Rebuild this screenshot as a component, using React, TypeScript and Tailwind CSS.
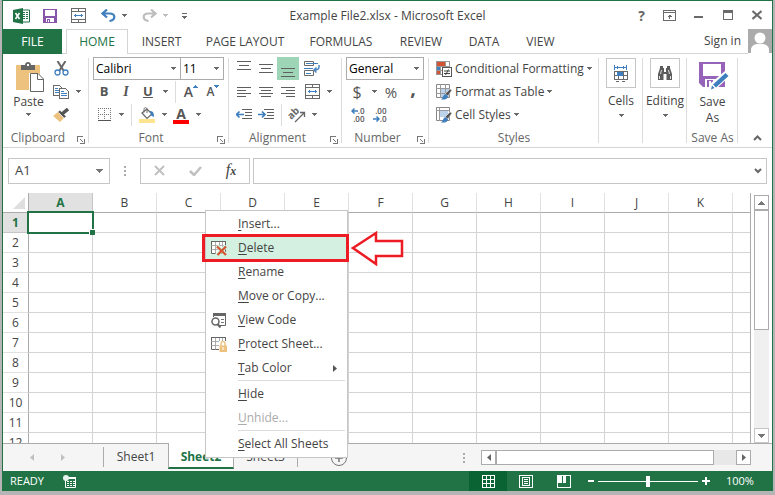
import React from "react";

const stroke = "#6a6a6a";
const blue = "#3f7fbf";

type SvgProps = { w: number; h: number; children: React.ReactNode; crisp?: boolean };

function Svg({ w, h, children, crisp = true }: SvgProps) {
  return (
    <svg
      width={w}
      height={h}
      viewBox={`0 0 ${w} ${h}`}
      fill="none"
      shapeRendering={crisp ? "crispEdges" : "auto"}
      className="shrink-0"
      aria-hidden="true"
    >
      {children}
    </svg>
  );
}

function Caret({ color = "#6a6a6a" }: { color?: string }) {
  return (
    <Svg w={5} h={3}>
      <path d="M0 0h5v1H0zM1 1h3v1H1zM2 2h1v1H2z" fill={color} />
    </Svg>
  );
}

function CaretButton({ label, color }: { label: string; color?: string }) {
  return (
    <button aria-label={label} className="flex h-[22px] w-3 shrink-0 items-center justify-center">
      <Caret color={color} />
    </button>
  );
}

function Tool({ label, children, active }: { label: string; children: React.ReactNode; active?: boolean }) {
  return (
    <button
      aria-label={label}
      className={`flex h-[23px] w-[22px] shrink-0 items-center justify-center ${active ? "bg-[#9fd5b7]" : ""}`}
    >
      {children}
    </button>
  );
}

function Divider() {
  return <span className="mx-1 h-[22px] w-px shrink-0 bg-[#dcdcdc]" />;
}

function Combo({ label, value, className }: { label: string; value: string; className: string }) {
  return (
    <div className={`relative h-[23px] border border-[#ababab] ${className}`}>
      <select aria-label={label} className="h-full w-full appearance-none bg-white pl-0.5 text-black outline-none">
        <option>{value}</option>
      </select>
      <span className="pointer-events-none absolute right-1 top-[9px]">
        <Caret />
      </span>
    </div>
  );
}

function Launcher({ label }: { label: string }) {
  return (
    <button aria-label={label} className="absolute right-1 top-[7px]">
      <Svg w={8} h={8}>
        <path d="M0.5 6V.5H6M3 3l3 3M7.5 3v4.5H3" stroke="#777" />
      </Svg>
    </button>
  );
}

function Group({
  name,
  width,
  launcher,
  children,
}: {
  name?: string;
  width: string;
  launcher?: boolean;
  children: React.ReactNode;
}) {
  return (
    <section className={`relative flex shrink-0 flex-col pt-[3px] ${width}`}>
      <div className="h-[73px] px-1">{children}</div>
      {name && (
        <footer className="relative h-[18px] text-center leading-[18px] text-[#666]">
          <span className={launcher ? "pr-4" : ""}>{name}</span>
          {launcher && <Launcher label={`${name} settings`} />}
        </footer>
      )}
      <span className="absolute bottom-1 right-0 top-1 w-px bg-[#dcdcdc]" />
    </section>
  );
}

/* ---------- icons ---------- */

const ExcelLogo = () => (
  <Svg w={17} h={16} crisp={false}>
    <path d="M9 2h7.500v12H9z" fill="#fff" stroke="#217346" />
    <path d="M10 4.500h2M13 4.500h2M10 6.500h2M13 6.500h2M10 8.500h2M13 8.500h2M10 10.500h2M13 10.500h2" stroke="#217346" />
    <path d="M0 2l10-2v16L0 14z" fill="#217346" />
    <path d="M2.500 5l4 6M6.500 5l-4 6" stroke="#fff" strokeWidth="1.600" />
  </Svg>
);

const SaveIcon = () => (
  <Svg w={14} h={14}>
    <path d="M0 0h14v14H0z" fill="#8855ab" />
    <path d="M2 1h10v6H2zM3 9h8v4H3z" fill="#fff" />
    <path d="M4 10h3v3H4z" fill="#8855ab" />
    <path d="M5 11h1v2H5z" fill="#fff" />
  </Svg>
);

const MergeIcon = () => (
  <Svg w={15} h={15}>
    <path d="M.5.500h14v14H.500zM0 3.500h15M0 11.500h15M7.500 0v4M7.500 11v4" stroke={stroke} />
    <path d="M3 7.500h9M4.500 6v3M10.500 6v3" stroke={blue} />
  </Svg>
);

const UndoIcon = ({ color, flip }: { color: string; flip?: boolean }) => (
  <Svg w={15} h={13} crisp={false}>
    <g transform={flip ? "translate(15 0) scale(-1 1)" : undefined} stroke={color} strokeWidth="2.200">
      <path d="M6 0.500L1.500 4.500 6 8.500M2 4.500h6.500c3 0 4.800 1.500 4.800 3.500s-1.500 3.500-4.800 4" />
    </g>
  </Svg>
);

const PasteIcon = () => (
  <Svg w={29} h={31} crisp={false}>
    <path d="M0 3h24v25H0z" fill="#ecc27e" />
    <path d="M5 3h4c0-4 6-4 6 0h4v5H5z" fill="#666" />
    <path d="M11 2h2v2h-2z" fill="#fff" />
    <path d="M13 11h9l6.500 6.500V31H13z" fill="#fff" />
    <path d="M14.500 11.500h7.500l5.500 5.500v12.500h-13zM21.500 11.500v6h6" stroke="#666" />
  </Svg>
);

const CutIcon = () => (
  <Svg w={15} h={15} crisp={false}>
    <path d="M3.500 0l6 9.500M11.500 0l-6 9.500" stroke="#666" strokeWidth="2" />
    <circle cx="3.500" cy="11.500" r="2.500" stroke={blue} strokeWidth="1.300" />
    <circle cx="11.500" cy="11.500" r="2.500" stroke={blue} strokeWidth="1.300" />
  </Svg>
);

const CopyIcon = () => (
  <Svg w={16} h={14}>
    <path d="M.500.500h6l2 2v8h-8z" fill="#fff" stroke={stroke} />
    <path d="M2 3.500h3M2 5.500h4M2 7.500h4" stroke={blue} />
    <path d="M6.500 3.500h6l3 3v7h-9z" fill="#fff" stroke={stroke} />
    <path d="M8 6.500h3M8 8.500h6M8 10.500h6" stroke={blue} />
  </Svg>
);

const BrushIcon = () => (
  <Svg w={16} h={14} crisp={false}>
    <path d="M0 8l5-4 6 6-4 4z" fill="#ecc27e" />
    <path d="M5 4l2-1.500 6 6L11 10z" fill="#555" />
    <path d="M9 6l6-5" stroke="#555" strokeWidth="3.500" />
    <path d="M5.500 4.500l6 6" stroke="#fff" strokeWidth=".7" />
  </Svg>
);

const BordersIcon = () => (
  <Svg w={13} h={13}>
    <path d="M.500 0v12M6.500 0v12M12.500 0v12M0 .500h13M0 6.500h13" stroke="#777" strokeDasharray="1 1" />
    <path d="M0 12.500h13" stroke="#555" />
  </Svg>
);

const BucketIcon = () => (
  <Svg w={16} h={16} crisp={false}>
    <path d="M3 6l5-4 5 5-5 4.500z" fill="#fff" stroke="#666" strokeWidth="1.200" />
    <path d="M5 5.500V2.500C5 0 8 0 8 2.500V6" stroke="#666" />
    <path d="M11 4c3 0 4 2 4 6l-3-1.500" fill={blue} />
    <path d="M0 12h16v4H0z" fill="#ffe48f" />
  </Svg>
);

const Lines = ({ rows, h }: { rows: Array<[number, number, number]>; h: number }) => (
  <Svg w={14} h={h}>
    {rows.map(([y, a, b]) => (
      <path key={y} d={`M${a} ${y}.5H${b}`} stroke="#5f5f5f" />
    ))}
  </Svg>
);

const IndentIcon = ({ out }: { out?: boolean }) => (
  <Svg w={16} h={11}>
    <path d="M6 .500h10M9 3.500h7M9 6.500h7M6 9.500h10" stroke="#5f5f5f" />
    <path
      d={out ? "M1 5.500h7M3.500 2.500l-3 3 3 3" : "M0 5.500h7M4 2.500l3 3-3 3"}
      stroke={blue}
      strokeWidth="1.700"
      shapeRendering="auto"
    />
  </Svg>
);

const WrapIcon = () => (
  <Svg w={16} h={15} crisp={false}>
    <path d="M.500.500h9v4h-9zM.500 9.500h9v5h-9z" stroke={stroke} />
    <path d="M2 2.500h12M0 7.500h9M2 12.500h5" stroke={blue} />
    <path d="M15 4c.5 4-1 5-5 5M12.500 6.500L10 9l2.500 2.500" stroke={blue} strokeWidth="1.400" />
  </Svg>
);

const OrientIcon = () => (
  <Svg w={22} h={22} crisp={false}>
    <text x="4" y="15" fontSize="10" fontWeight="700" fill="#666" transform="rotate(-45 6 14)" fontFamily="Open Sans">
      ab
    </text>
    <path d="M9 18l9-9M14 8.500h4.500V13" stroke="#666" strokeWidth="1.300" />
  </Svg>
);

function DecimalIcon({ less }: { less?: boolean }) {
  const arrow = (
    <Svg w={7} h={6} crisp={false}>
      <path
        d={less ? "M0 3h6M3.500.500L6 3 3.500 5.500" : "M1 3h6M3.500.500L1 3l2.500 2.500"}
        stroke={blue}
        strokeWidth="1.500"
      />
    </Svg>
  );
  return (
    <span className="flex w-[15px] flex-col text-[8px] font-semibold leading-[8px] text-[#555]">
      <span className="flex items-center justify-end">
        {!less && arrow}
        <span>{less ? ".00" : ".0"}</span>
      </span>
      <span className="flex items-center justify-end">
        {less && arrow}
        <span>{less ? ".0" : ".00"}</span>
      </span>
    </span>
  );
}

const ConditionalIcon = () => (
  <Svg w={16} h={16}>
    <path d="M.500.500h13v13H.500zM0 5h14M0 9h14M9.500 0v14M4.500 0v14" stroke="#999" fill="#fff" />
    <path d="M1 1h8v4H1z" fill="#d35230" />
    <path d="M1 6h3v3H1z" fill={blue} />
    <path d="M1 10h3v3H1z" fill="#d35230" />
    <path d="M6.500 6.500h9v9h-9z" fill="#fff" stroke="#555" />
    <path d="M8 10h6M8 12.500h6M12.500 8.500l-3 5.500" stroke="#444" shapeRendering="auto" />
  </Svg>
);

const TableBrushIcon = ({ single }: { single?: boolean }) => (
  <Svg w={16} h={16} crisp={false}>
    <path d="M.500.500h13v13H.500z" fill="#fff" stroke="#888" />
    <path d={single ? "M3 3h9v7H3z" : "M5 5h8v8H5z"} fill="#bcd3ec" />
    <path
      d={single ? "M0 3.500h14M3.500 0v14" : "M0 4.500h14M0 9.500h14M4.500 0v14M9.500 0v14"}
      stroke="#999"
    />
    <path d="M14 5l2 1-4 6-3-2z" fill="#555" stroke="#fff" strokeWidth=".5" />
    <path d="M9 10l3 2c0 3-3 4-7 3.500 2-1.500 2-4 4-5.500z" fill={blue} />
  </Svg>
);

const CellsIcon = () => (
  <Svg w={16} h={17}>
    <path d="M1 2.500h13M1.500 0v5M13.500 0v5M4.500 1v3M10.500 1v3" stroke={blue} />
    <path d="M1.500 6.500h13v8h-13zM1 10.500h14M5.500 6v9M10.500 6v9M3 16.500h3M9 16.500h3" stroke={stroke} />
    <path d="M4 7h6v4H4z" fill={blue} />
  </Svg>
);

const BinocularsIcon = () => (
  <Svg w={16} h={14} crisp={false}>
    <path d="M3 0h3v2h1v4h2V2h1V0h3v2l2 6v6H9.500V8h-3v6H1V8l2-6z" fill="#5c5c5c" />
    <path d="M4.500 4l-1 4M11.500 4l1 4M2.500 10v3M13.500 10v3" stroke="#fff" strokeWidth=".8" />
  </Svg>
);

const SaveAsIcon = () => (
  <Svg w={30} h={28} crisp={false}>
    <path d="M0 0h26v25H4l-4-4z" fill="#9563b8" />
    <path d="M4 2h18v12H4zM6 17h13v8H6z" fill="#fff" />
    <path d="M8 18h6v7H8z" fill="#9563b8" />
    <path d="M10 19h2v6h-2z" fill="#fff" />
    <path d="M26 9l5 5-14 13-7 2 2-8z" fill="#fff" />
    <path d="M26.500 11l3 3L17 25.500l-3-3z" fill={blue} />
    <path d="M13 23.500l2.500 2.500L12 27.500z" fill={blue} />
  </Svg>
);

const SheetIcon = ({ children }: { children: React.ReactNode }) => (
  <Svg w={16} h={16} crisp={false}>
    <path d="M.500 1.500h14v12h-14z" fill="#fff" stroke="#666" />
    <path d="M0 1.500h15" stroke="#666" />
    <path d="M0 5.500h15M0 9.500h15M4.500 2v12M8.500 2v12M11.500 2v12" stroke="#999" strokeWidth=".8" />
    {children}
  </Svg>
);

const DeleteSheetIcon = () => (
  <SheetIcon>
    <path d="M6 6l9 9M15 6l-9 9" stroke="#d4f0e0" strokeWidth="4" />
    <path d="M6 6.500l9 8.500M15 6.500L6.500 15" stroke="#d35230" strokeWidth="2.200" />
  </SheetIcon>
);

const ProtectIcon = () => (
  <SheetIcon>
    <path d="M8 5h8v11H8z" fill="#fff" />
    <path d="M10 10V7.500c0-2.500 4-2.500 4 0V10" stroke="#ecc27e" strokeWidth="1.400" />
    <path d="M8.500 9.500H16V16H8.500z" fill="#ecc27e" />
    <path d="M12 11v3" stroke="#fff" />
  </SheetIcon>
);

const CodeIcon = () => (
  <Svg w={16} h={15} crisp={false}>
    <path d="M2.500 4V.500h12v12H9" stroke="#666" />
    <path d="M2 1.500h13" stroke="#666" strokeWidth="3" />
    <path d="M10 6.500h3M10 9.500h3" stroke="#777" />
    <circle cx="4.500" cy="8.500" r="3.500" stroke="#666" strokeWidth="1.500" fill="#fff" />
    <path d="M6.500 11l3 3.500" stroke="#666" strokeWidth="2" />
  </Svg>
);

/* ---------- regions ---------- */

function TitleBar() {
  return (
    <header className="grid h-7 shrink-0 grid-cols-[1fr_auto_1fr] items-center">
      <div className="flex items-center pl-2.5 pt-px">
        <ExcelLogo />
        <button aria-label="Save" className="ml-[13px]">
          <SaveIcon />
        </button>
        <button aria-label="Merge" className="ml-3.5">
          <MergeIcon />
        </button>
        <button aria-label="Undo" className="ml-[15px]">
          <UndoIcon color={blue} />
        </button>
        <span className="ml-1.5">
          <Caret />
        </span>
        <button aria-label="Redo" className="ml-[15px]">
          <UndoIcon color="#bdbdbd" flip />
        </button>
        <span className="ml-1.5">
          <Caret color="#bdbdbd" />
        </span>
        <button aria-label="Customize toolbar" className="ml-3.5">
          <Svg w={5} h={6}>
            <path d="M0 0h5v1H0zM0 3h5v1H0zM1 4h3v1H1zM2 5h1v1H2z" fill={stroke} />
          </Svg>
        </button>
      </div>
      <h1 className="pt-0.5 text-[#444]">Example File2.xlsx - Microsoft Excel</h1>
      <div className="flex items-center justify-end pr-2.5">
        <button aria-label="Help" className="text-[14px] font-bold text-[#666]">
          ?
        </button>
        <button aria-label="Ribbon display options" className="ml-[18px]">
          <Svg w={13} h={11}>
            <path d="M.500.500h12v10H.500zM0 2.500h13M6.500 9V4.500M4.500 6.500h4M5.500 5.500h2" stroke={stroke} />
          </Svg>
        </button>
        <button aria-label="Minimize" className="ml-[18px]">
          <Svg w={9} h={10}>
            <path d="M0 7h9" stroke={stroke} strokeWidth="2" />
          </Svg>
        </button>
        <button aria-label="Maximize" className="ml-5">
          <Svg w={10} h={10}>
            <path d="M.500.500h9v9H.500zM0 1.500h10M0 2.500h10" stroke={stroke} />
          </Svg>
        </button>
        <button aria-label="Close" className="ml-[19px]">
          <Svg w={10} h={10} crisp={false}>
            <path d="M.500 1l9 8M9.500 1l-9 8" stroke={stroke} strokeWidth="2" />
          </Svg>
        </button>
      </div>
    </header>
  );
}

const tabs: Array<[string, string]> = [
  ["INSERT", "w-[67px]"],
  ["PAGE LAYOUT", "w-[100px]"],
  ["FORMULAS", "w-[92px]"],
  ["REVIEW", "w-[68px]"],
  ["DATA", "w-[58px]"],
  ["VIEW", "w-[55px]"],
];

function RibbonTabs() {
  return (
    <nav className="flex h-[25px] shrink-0 text-[#444]">
      <button className="w-[59px] bg-[#217346] text-white">FILE</button>
      <span className="w-1 border-b border-[#d4d4d4]" />
      <button className="w-[62px] border-x border-t border-[#d4d4d4] text-[#217346]">HOME</button>
      <div className="flex flex-1 border-b border-[#d4d4d4]">
        {tabs.map(([name, width]) => (
          <button key={name} className={`whitespace-nowrap pt-px ${width}`}>
            {name}
          </button>
        ))}
        <a href="#signin" className="ml-auto mr-[7px] leading-6">
          Sign in
        </a>
      </div>
      <Svg w={24} h={24} crisp={false}>
        <path d="M0 0h24v24H0z" fill="#ababab" />
        <circle cx="12" cy="9" r="5.500" fill="#fff" />
        <path d="M3 24v-3c0-4 3-5.500 6-6h6c3 .5 6 2 6 6v3z" fill="#fff" />
      </Svg>
    </nav>
  );
}

function BigButton({ label, icon }: { label: string; icon: React.ReactNode }) {
  return (
    <button className="flex w-full flex-col items-center pt-px">
      <span className="flex h-[30px] w-[30px] items-center justify-center border border-[#c6c6c6]">{icon}</span>
      <span className="mt-1 leading-[18px]">{label}</span>
      <span className="mt-1">
        <Caret />
      </span>
    </button>
  );
}

function StyleButton({ icon, label }: { icon: React.ReactNode; label: string }) {
  return (
    <button className="flex h-[23px] items-center whitespace-nowrap">
      {icon}
      <span className="ml-[3px] mr-[3px]">{label}</span>
      <Caret />
    </button>
  );
}

function Ribbon() {
  return (
    <div className="flex h-[94px] shrink-0 border-b border-[#d4d4d4] text-[#444]">
      <Group name="Clipboard" width="w-[86px]" launcher>
        <div className="flex">
          <button className="flex w-[43px] flex-col items-center pt-[5px]">
            <span className="pl-[3px]">
              <PasteIcon />
            </span>
            <span className="leading-[18px]">Paste</span>
            <span className="mt-0.5">
              <Caret />
            </span>
          </button>
          <div>
            <Tool label="Cut">
              <CutIcon />
            </Tool>
            <div className="flex">
              <Tool label="Copy">
                <CopyIcon />
              </Tool>
              <CaretButton label="Copy options" />
            </div>
            <Tool label="Format painter">
              <BrushIcon />
            </Tool>
          </div>
        </div>
      </Group>
      <Group name="Font" width="w-[140px]" launcher>
        <div className="flex">
          <Combo label="Font" value="Calibri" className="w-[88px]" />
          <Combo label="Font size" value="11" className="-ml-px w-[44px]" />
        </div>
        <div className="flex items-center text-[13px] font-bold text-[#555]">
          <Tool label="Bold">B</Tool>
          <Tool label="Italic">
            <i className="font-['Liberation_Serif',serif] text-[14px]">I</i>
          </Tool>
          <Tool label="Underline">
            <u>U</u>
          </Tool>
          <CaretButton label="Underline options" />
          <Divider />
          <Tool label="Grow font">
            <span className="text-[14px] font-semibold">A</span>
            <span className="mb-2.5 rotate-180">
              <Caret color={blue} />
            </span>
          </Tool>
          <Tool label="Shrink font">
            <span className="text-[12px] font-semibold">A</span>
            <span className="mb-2.5">
              <Caret color={blue} />
            </span>
          </Tool>
        </div>
        <div className="flex items-center">
          <Tool label="Borders">
            <BordersIcon />
          </Tool>
          <CaretButton label="Border options" />
          <Divider />
          <Tool label="Fill color">
            <BucketIcon />
          </Tool>
          <CaretButton label="Fill options" />
          <Tool label="Font color">
            <span className="h-[18px] w-4 border-b-4 border-[#f00] text-[14px] font-bold leading-[15px] text-[#555]">A</span>
          </Tool>
          <CaretButton label="Font color options" />
        </div>
      </Group>
      <Group name="Alignment" width="w-[113px]" launcher>
        <div className="flex">
          <Tool label="Top align">
            <Lines h={16} rows={[[0, 0, 14], [4, 2, 12], [8, 0, 14]]} />
          </Tool>
          <Tool label="Middle align">
            <Lines h={9} rows={[[0, 0, 14], [4, 2, 12], [8, 0, 14]]} />
          </Tool>
          <Tool label="Bottom align" active>
            <Lines h={17} rows={[[8, 0, 14], [12, 2, 12], [16, 0, 14]]} />
          </Tool>
          <span className="w-0.5" />
          <Tool label="Wrap text">
            <WrapIcon />
          </Tool>
        </div>
        <div className="flex items-center">
          <Tool label="Align left">
            <Lines h={10} rows={[[0, 0, 14], [3, 0, 9], [6, 0, 14], [9, 0, 9]]} />
          </Tool>
          <Tool label="Center">
            <Lines h={10} rows={[[0, 0, 14], [3, 2, 12], [6, 0, 14], [9, 2, 12]]} />
          </Tool>
          <Tool label="Align right">
            <Lines h={10} rows={[[0, 0, 14], [3, 5, 14], [6, 0, 14], [9, 5, 14]]} />
          </Tool>
          <span className="w-0.5" />
          <Tool label="Merge and center">
            <MergeIcon />
          </Tool>
          <CaretButton label="Merge options" />
        </div>
        <div className="flex items-center">
          <Tool label="Decrease indent">
            <IndentIcon out />
          </Tool>
          <Tool label="Increase indent">
            <IndentIcon />
          </Tool>
          <Divider />
          <Tool label="Orientation">
            <OrientIcon />
          </Tool>
          <CaretButton label="Orientation options" />
        </div>
      </Group>
      <Group name="Number" width="w-[87px]" launcher>
        <Combo label="Number format" value="General" className="w-[78px]" />
        <div className="flex items-center text-[16px] leading-5 text-[#555]">
          <Tool label="Currency">$</Tool>
          <CaretButton label="Currency options" />
          <Tool label="Percent">
            <span className="text-[15px]">%</span>
          </Tool>
          <Tool label="Comma style">
            <span className="pb-2 text-[20px] font-bold leading-4">,</span>
          </Tool>
        </div>
        <div className="flex">
          <Tool label="Increase decimal">
            <DecimalIcon />
          </Tool>
          <Tool label="Decrease decimal">
            <DecimalIcon less />
          </Tool>
        </div>
      </Group>
      <Group name="Styles" width="w-[170px]">
        <div className="pl-[3px]">
          <StyleButton icon={<ConditionalIcon />} label="Conditional Formatting" />
          <StyleButton icon={<TableBrushIcon />} label="Format as Table" />
          <StyleButton icon={<TableBrushIcon single />} label="Cell Styles" />
        </div>
      </Group>
      <Group width="w-[44px]">
        <BigButton label="Cells" icon={<CellsIcon />} />
      </Group>
      <Group width="w-[44px]">
        <BigButton label="Editing" icon={<BinocularsIcon />} />
      </Group>
      <Group name="Save As" width="w-[51px]">
        <button className="flex w-full flex-col items-center pt-[5px] leading-4">
          <span className="pl-0.5">
            <SaveAsIcon />
          </span>
          <span className="mt-1">Save</span>
          <span>As</span>
        </button>
      </Group>
      <button aria-label="Collapse ribbon" className="mb-1.5 ml-auto mr-2.5 self-end">
        <Svg w={9} h={6} crisp={false}>
          <path d="M1 5l3.500-3.500L8 5" stroke="#666" strokeWidth="2" />
        </Svg>
      </button>
    </div>
  );
}

function Dots({ className }: { className: string }) {
  return (
    <span className={`flex flex-col items-center justify-center ${className}`}>
      <i className="h-0.5 w-0.5 bg-[#ababab]" />
      <i className="h-0.5 w-0.5 bg-[#ababab]" />
      <i className="h-0.5 w-0.5 bg-[#ababab]" />
    </span>
  );
}

function FormulaBar() {
  return (
    <div className="flex h-[45px] shrink-0 items-center px-[5px]">
      <div className="flex h-[26px] w-[102px] items-center border border-[#c6c6c6] px-1.5">
        <input aria-label="Name box" defaultValue="A1" className="w-full min-w-0 text-[13px] text-[#444] outline-none" />
        <Svg w={7} h={4}>
          <path d="M0 0h7v1H0zM1 1h5v1H1zM2 2h3v1H2zM3 3h1v1H3z" fill="#777" />
        </Svg>
      </div>
      <Dots className="w-[30px] gap-0.5" />
      <div className="flex h-[26px] w-[110px] items-center border border-[#c6c6c6]">
        <button aria-label="Cancel" className="flex w-9 justify-center">
          <Svg w={11} h={11} crisp={false}>
            <path d="M1 1l9 9M10 1l-9 9" stroke="#c0c0c0" strokeWidth="2" />
          </Svg>
        </button>
        <button aria-label="Enter" className="flex w-9 justify-center">
          <Svg w={13} h={10} crisp={false}>
            <path d="M1 5l4 4 7-8" stroke="#c0c0c0" strokeWidth="2.500" />
          </Svg>
        </button>
        <button
          aria-label="Insert function"
          className="w-9 font-['Liberation_Serif',serif] text-[16px] italic leading-5 text-[#444]"
        >
          f<span className="text-[12px] font-bold">x</span>
        </button>
      </div>
      <div className="ml-[3px] flex h-[26px] flex-1 items-center border border-[#c6c6c6] pr-1">
        <input aria-label="Formula" className="min-w-0 flex-1 outline-none" />
        <Svg w={8} h={6} crisp={false}>
          <path d="M1 1l3 3 3-3" stroke="#666" strokeWidth="2" />
        </Svg>
      </div>
    </div>
  );
}

const columns = ["A", "B", "C", "D", "E", "F", "G", "H", "I", "J", "K"];
const rowNumbers = Array.from({ length: 12 }, (_, i) => i + 1);

function Sheet() {
  return (
    <div className="flex min-h-0 flex-1">
      <div className="min-w-0 flex-1 overflow-hidden border-r border-[#ababab]">
        <table className="w-full table-fixed border-separate border-spacing-0 text-center leading-[18px] text-[#444]">
          <thead>
            <tr className="h-5">
              <th aria-label="Select all" className="w-[26px] border-b border-r border-[#ababab] p-0">
                <span className="flex justify-end pr-[3px]">
                  <Svg w={12} h={12} crisp={false}>
                    <path d="M12 0v12H0z" fill="#dfdfdf" />
                  </Svg>
                </span>
              </th>
              {columns.map((c) => (
                <th
                  key={c}
                  className={`w-16 border-b border-r border-b-[#ababab] p-0 ${
                    c === "A" ? "border-r-[#c6c6c6] bg-[#e1e1e1] font-bold text-[#217346]" : "border-r-[#e1e1e1] font-normal"
                  }`}
                >
                  {c}
                </th>
              ))}
              <th aria-label="L" className="border-b border-[#ababab] p-0" />
            </tr>
          </thead>
          <tbody>
            {rowNumbers.map((r) => (
              <tr key={r} className="h-5">
                <th
                  className={`border-b border-r border-r-[#ababab] p-0 pt-px ${
                    r === 1 ? "border-b-[#c6c6c6] bg-[#e1e1e1] font-bold text-[#217346]" : "border-b-[#e1e1e1] font-normal"
                  }`}
                >
                  {r}
                </th>
                {columns.map((c) => (
                  <td key={c} className="relative border-b border-r border-[#d4d4d4] p-0">
                    {c === "A" && r === 1 && (
                      <span className="absolute -inset-0.5 z-10 border-2 border-[#217346]">
                        <span className="absolute -bottom-[3px] -right-[3px] h-1.5 w-1.5 border-l border-t border-white bg-[#217346]" />
                      </span>
                    )}
                  </td>
                ))}
                <td className="border-b border-[#d4d4d4] p-0" />
              </tr>
            ))}
          </tbody>
        </table>
      </div>
      <div className="flex w-[21px] flex-col px-[3px] pt-0.5">
        <button aria-label="Scroll up" className="flex h-[15px] items-center justify-center border border-[#ababab]">
          <Svg w={7} h={4}>
            <path d="M3 0h1v1H3zM2 1h3v1H2zM1 2h5v1H1zM0 3h7v1H0z" fill="#777" />
          </Svg>
        </button>
        <div className="flex flex-1 flex-col bg-[#f0f0f0]">
          <div className="h-[55%] border border-[#ababab] bg-white" />
        </div>
        <button aria-label="Scroll down" className="flex h-[15px] items-center justify-center border border-[#c6c6c6] bg-white">
          <Svg w={7} h={4}>
            <path d="M0 0h7v1H0zM1 1h5v1H1zM2 2h3v1H2zM3 3h1v1H3z" fill="#777" />
          </Svg>
        </button>
      </div>
    </div>
  );
}

function Arrow({ dir, color }: { dir: "left" | "right"; color: string }) {
  return (
    <Svg w={4} h={7} crisp={false}>
      <path d={dir === "left" ? "M4 0v7L0 3.500z" : "M0 0v7l4-3.500z"} fill={color} />
    </Svg>
  );
}

function SheetBar() {
  return (
    <div className="flex h-7 shrink-0 border-t border-[#ababab] bg-[#f5f5f5] leading-4 text-[#444]">
      <button aria-label="Previous sheet" className="flex w-[58px] items-center justify-center">
        <Arrow dir="left" color="#c0c0c0" />
      </button>
      <button aria-label="Next sheet" className="flex w-[42px] items-center">
        <Arrow dir="right" color="#c0c0c0" />
      </button>
      <button className="my-[3px] h-5 w-[65px] border-l border-[#ababab]">Sheet1</button>
      <button className="-mt-px h-[26px] w-[66px] border-x border-b-2 border-x-[#ababab] border-b-[#217346] bg-white pt-1 font-bold text-[#217346]">
        Sheet2
      </button>
      <button className="my-[3px] h-5 w-[64px] border-r border-[#ababab]">Sheet3</button>
      <button aria-label="New sheet" className="ml-8 self-center">
        <Svg w={18} h={18} crisp={false}>
          <circle cx="9" cy="9" r="7.500" stroke="#777" />
          <path d="M9 5v8M5 9h8" stroke="#777" strokeWidth="1.500" />
        </Svg>
      </button>
      <Dots className="ml-auto mr-4 gap-0.5" />
      <div className="mr-[21px] mt-1.5 flex h-[15px] w-[270px] bg-[#e8e8e8]">
        <button aria-label="Scroll left" className="flex w-[15px] items-center justify-center border border-[#ababab] bg-white">
          <Arrow dir="left" color="#666" />
        </button>
        <div className="w-[218px] border border-[#ababab] bg-white" />
        <button
          aria-label="Scroll right"
          className="ml-auto flex w-[15px] items-center justify-center border border-[#ababab] bg-white"
        >
          <Arrow dir="right" color="#666" />
        </button>
      </div>
    </div>
  );
}

function StatusBar() {
  return (
    <footer className="flex h-5 shrink-0 items-center bg-[#217346] text-white">
      <span className="w-[60px] pl-[7px] pt-px text-[11px]">READY</span>
      <button aria-label="Record macro">
        <Svg w={13} h={13} crisp={false}>
          <path d="M2.500 4v8.500h10v-10H6" stroke="#fff" />
          <path d="M6 2h7v2H6z" fill="#fff" />
          <path d="M4 6.500h2M7 6.500h2M10 6.500h2M4 8.500h2M7 8.500h2M10 8.500h2M4 10.500h2M7 10.500h2M10 10.500h2" stroke="#fff" />
          <circle cx="3" cy="3" r="3" fill="#e8f2ec" />
        </Svg>
      </button>
      <button aria-label="Normal view" className="ml-auto flex h-5 w-[38px] items-center justify-center bg-[#0a6332]">
        <Svg w={13} h={13}>
          <path d="M.500.500h12v12H.500zM4.500 0v13M8.500 0v13M0 4.500h13M0 8.500h13" stroke="#fff" />
        </Svg>
      </button>
      <button aria-label="Page layout view" className="flex w-[38px] items-center justify-center">
        <Svg w={14} h={13}>
          <path d="M.500.500h13v12H.500zM3.500 2.500h7v8h-7zM5 4.500h4M5 6.500h4M5 8.500h4" stroke="#fff" />
        </Svg>
      </button>
      <button aria-label="Page break preview" className="flex w-[38px] items-center justify-center">
        <Svg w={14} h={13}>
          <path d="M.500.500h13v12H.500z" stroke="#fff" />
          <path d="M1 0h4v8H1zM6 0h3v8H6z" fill="#fff" />
        </Svg>
      </button>
      <button aria-label="Zoom out" className="ml-[5px]">
        <Svg w={6} h={8}>
          <path d="M0 4h6" stroke="#fff" strokeWidth="2" />
        </Svg>
      </button>
      <input
        type="range"
        aria-label="Zoom"
        defaultValue={50}
        className="ml-1 h-3 w-[100px] appearance-none bg-transparent bg-[linear-gradient(#fff,#fff)] bg-[length:100%_1px] bg-center bg-no-repeat [&::-webkit-slider-thumb]:h-[11px] [&::-webkit-slider-thumb]:w-1 [&::-webkit-slider-thumb]:appearance-none [&::-webkit-slider-thumb]:bg-white"
      />
      <button aria-label="Zoom in" className="ml-1">
        <Svg w={8} h={8}>
          <path d="M0 4h8M4 0v8" stroke="#fff" strokeWidth="2" />
        </Svg>
      </button>
      <span className="w-[62px] pl-4 pt-px text-[11px]">100%</span>
    </footer>
  );
}

type MenuEntry = { key: string; rest: string; icon?: React.ReactNode; disabled?: boolean; submenu?: boolean; rule?: boolean };

const menu: MenuEntry[] = [
  { key: "I", rest: "nsert..." },
  { key: "D", rest: "elete", icon: <DeleteSheetIcon /> },
  { key: "R", rest: "ename" },
  { key: "M", rest: "ove or Copy..." },
  { key: "V", rest: "iew Code", icon: <CodeIcon /> },
  { key: "P", rest: "rotect Sheet...", icon: <ProtectIcon /> },
  { key: "T", rest: "ab Color", submenu: true },
  { key: "H", rest: "ide", rule: true },
  { key: "U", rest: "nhide...", disabled: true },
  { key: "S", rest: "elect All Sheets", rule: true },
];

function ContextMenu() {
  return (
    <div className="absolute left-[205px] top-[210px] z-20 w-[143px] border border-[#c6c6c6] bg-white py-px text-[#444]" role="menu">
      {menu.map((m) => (
        <React.Fragment key={m.key}>
          {m.rule && <hr className="ml-8 mr-0.5 h-0.5 border-t border-[#dcdcdc]" />}
          <button
            role="menuitem"
            disabled={m.disabled}
            className={`flex h-6 w-full items-center whitespace-nowrap text-left ${m.disabled ? "text-[#ababab]" : ""} ${
              m.key === "D" ? "bg-[#d3f0e0]" : ""
            }`}
          >
            <span className="w-8 pl-[5px]">{m.icon}</span>
            <span>
              <u className="underline-offset-2">{m.key}</u>
              {m.rest}
            </span>
            {m.submenu && (
              <span className="ml-auto mr-2.5">
                <Arrow dir="right" color="#555" />
              </span>
            )}
          </button>
        </React.Fragment>
      ))}
      <div className="absolute -left-1 -right-0.5 top-[23px] h-7 border-[3px] border-[#ed1c24]" />
      <div className="absolute left-[145px] top-[19px]">
        <Svg w={53} h={36} crisp={false}>
          <path d="M2 18L25 3v8h26v15H25v8z" fill="#fff" stroke="#ed1c24" strokeWidth="2.500" />
        </Svg>
      </div>
    </div>
  );
}

export default function App() {
  return (
    <div className="relative flex h-screen w-full flex-col bg-[#b5b5b5] px-0.5 pb-1 font-['Open_Sans','Noto_Sans',sans-serif] text-[12px]">
      <div className="flex min-h-0 flex-1 flex-col border-x border-t border-[#217346] bg-white">
        <TitleBar />
        <RibbonTabs />
        <Ribbon />
        <FormulaBar />
        <Sheet />
        <SheetBar />
        <StatusBar />
      </div>
      <ContextMenu />
    </div>
  );
}
